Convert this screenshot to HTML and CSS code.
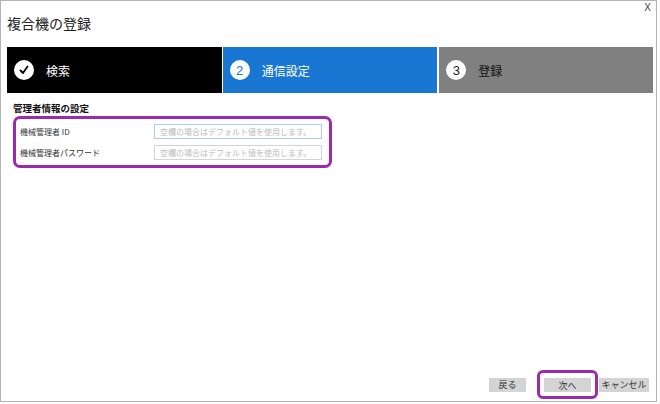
FILE: index.html
```html
<!DOCTYPE html>
<html lang="ja">
<head>
	<meta charset="UTF-8">
	<title>複合機の登録</title>
	<link rel="stylesheet" href="styles.css">
</head>
<body>
	<div class="window">
		<span class="close">X</span>
		<h1 class="title">複合機の登録</h1>

		<ul class="steps">
			<li class="step done">
				<span class="num">
					<svg width="12" height="12" viewBox="0 0 12 12"><path d="M2.5 6.5 L5 9 L9.5 2.5" fill="none" stroke="#000" stroke-width="1.8" stroke-linecap="round" stroke-linejoin="round"/></svg>
				</span>
				<span class="label">検索</span>
			</li>
			<li class="step current">
				<span class="num">2</span>
				<span class="label">通信設定</span>
			</li>
			<li class="step next">
				<span class="num">3</span>
				<span class="label">登録</span>
			</li>
		</ul>

		<div class="main">
			<h2 class="section">管理者情報の設定</h2>
			<div class="fields">
				<label>機械管理者 ID</label>
				<input type="text" class="focus" placeholder="空欄の場合はデフォルト値を使用します。">
				<label>機械管理者パスワード</label>
				<input type="password" placeholder="空欄の場合はデフォルト値を使用します。">
			</div>
		</div>

		<div class="footer">
			<span class="btn back">戻る</span>
			<span class="mark"><span class="btn">次へ</span></span>
			<span class="btn cancel">キャンセル</span>
		</div>
	</div>
</body>
</html>
```

FILE: styles.css
```css
* {
	margin: 0;
	padding: 0;
	box-sizing: border-box;
}
li {
	list-style: none;
}
body {
	width: 660px;
	height: 404px;
	background: #fff;
	font-family: "Noto Sans CJK JP", "Noto Sans", sans-serif;
	color: #222;
}
.window {
	position: relative;
	display: flex;
	flex-direction: column;
	width: 657px;
	height: 402px;
	padding: 0 3px 0 6px;
	border: 1px solid #b4b4b4;
}
.close {
	position: absolute;
	top: 1px;
	right: 5px;
	font-family: "Liberation Sans", sans-serif;
	font-size: 10px;
	color: #444;
}
.title {
	height: 46px;
	padding-top: 11px;
	font-size: 14px;
	font-weight: normal;
	line-height: 22px;
	color: #222;
}
.steps {
	display: grid;
	grid-template-columns: 1fr 1fr 1fr;
	gap: 1px;
	height: 46px;
}
.step {
	display: flex;
	align-items: center;
	gap: 12px;
	padding-left: 7px;
	font-size: 12px;
}
.step .num {
	display: flex;
	align-items: center;
	justify-content: center;
	width: 20px;
	height: 20px;
	border-radius: 50%;
	background: #fff;
	font-family: "Liberation Sans", sans-serif;
	font-size: 13px;
}
.step.done {
	background: #000;
	color: #fff;
}
.step.current {
	background: #1976d2;
	color: #fff;
}
.step.current .num {
	color: #1976d2;
}
.step.next {
	background: #808080;
	color: #111;
	margin-left: 1px;
}
.step.next .num {
	color: #222;
}
.main {
	flex: 1;
	padding-left: 6px;
}
.section {
	margin-top: 9px;
	margin-bottom: 2px;
	font-size: 9.5px;
	line-height: 12px;
	color: #111;
}
.fields {
	display: grid;
	grid-template-columns: 134px 168px;
	align-items: center;
	row-gap: 6px;
	width: 319px;
	padding: 5px 7px 5px 4px;
	border: 3px solid #9b2aad;
	border-radius: 7px;
}
.fields label {
	font-size: 8px;
	color: #333;
}
.fields input {
	height: 15px;
	padding-left: 5px;
	border: 1px solid #d4d4d4;
	background: #fff;
	font-family: "Noto Sans CJK JP", sans-serif;
	font-size: 8px;
	outline: none;
}
.fields input.focus {
	border-color: #a9cfea;
}
.fields input::placeholder {
	color: #bcbcbc;
}
.footer {
	display: flex;
	justify-content: flex-end;
	align-items: center;
	padding: 0 4px 2px 0;
}
.btn {
	display: flex;
	align-items: center;
	justify-content: center;
	height: 14px;
	background: #d4d4d4;
	font-size: 9px;
	color: #333;
}
.back {
	width: 37px;
	margin-right: 11px;
}
.mark {
	padding: 5px 4px 4px;
	margin-right: 1px;
	border: 3px solid #9b2aad;
	border-radius: 6px;
}
.mark .btn {
	width: 47px;
}
.cancel {
	width: 50px;
}
```
